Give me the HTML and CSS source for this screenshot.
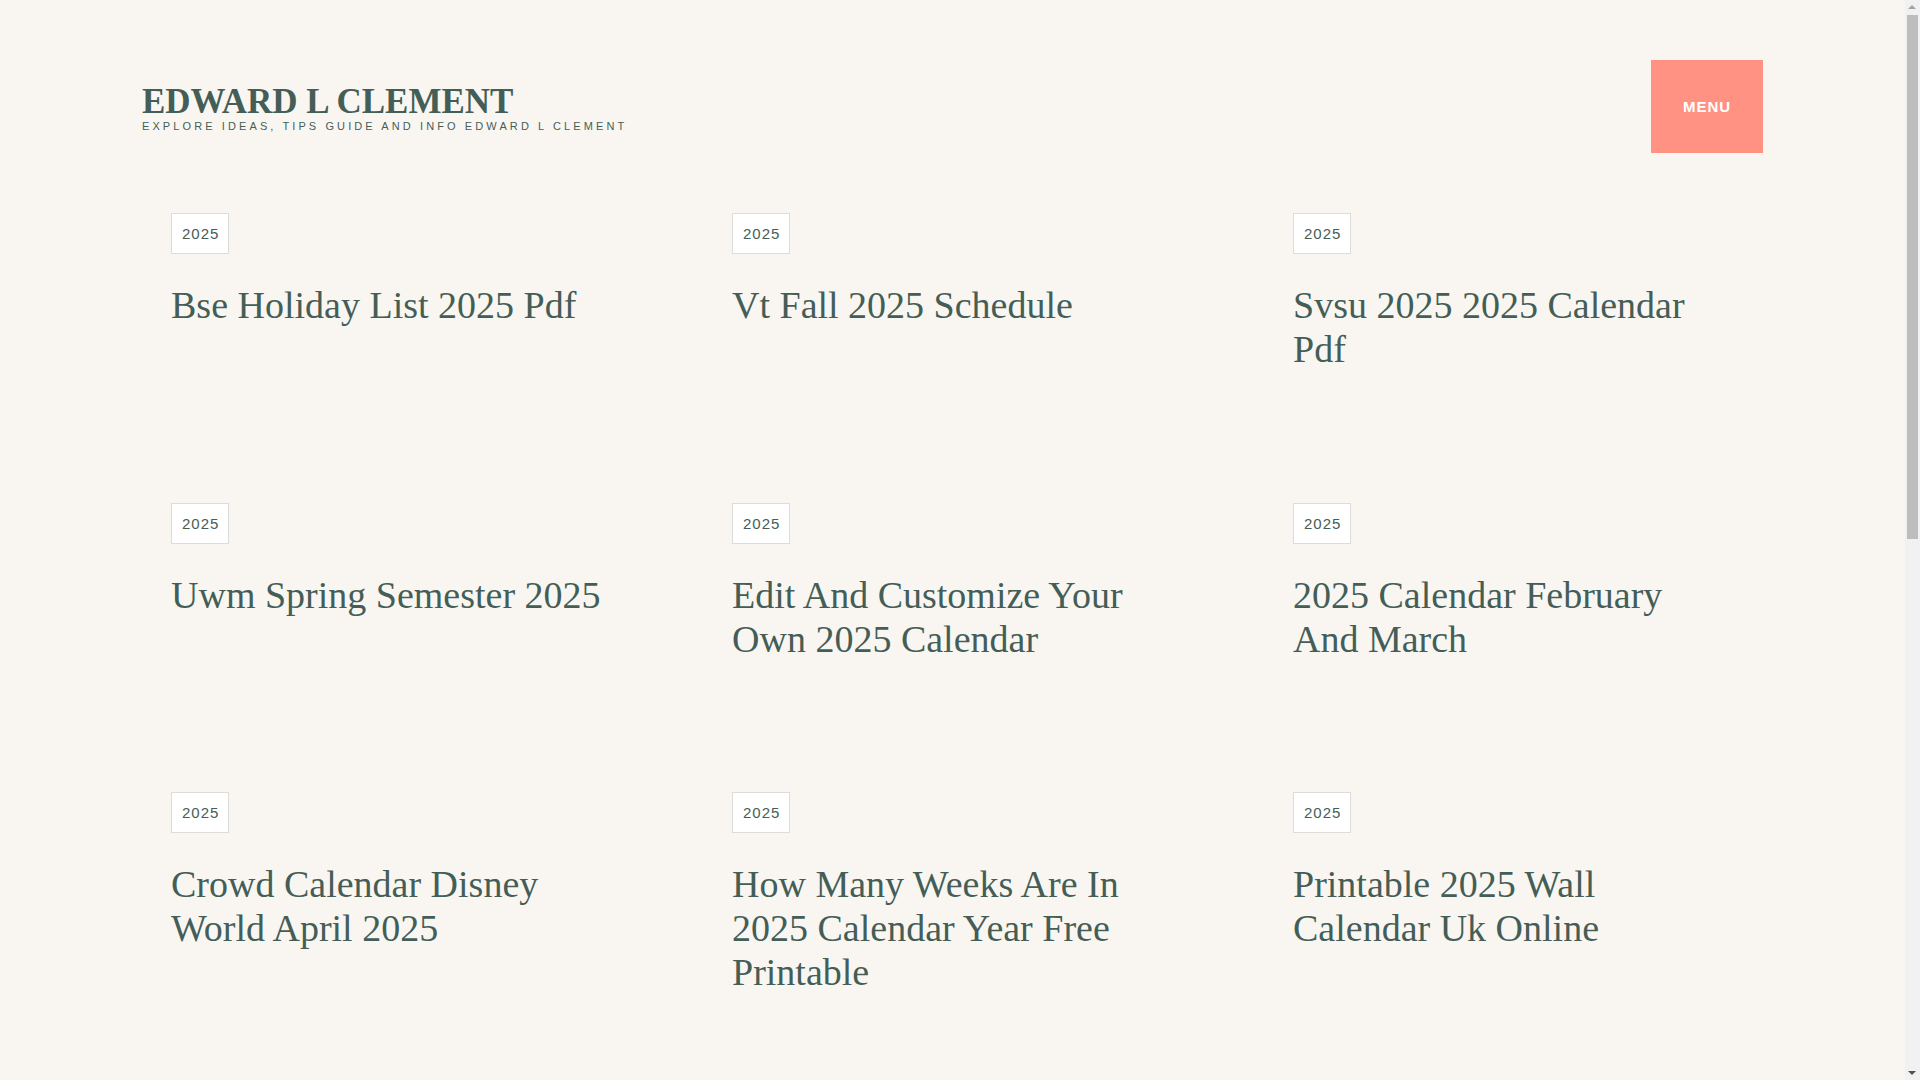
FILE: index.html
```html
<!DOCTYPE html>
<html lang="en">
<head>
<meta charset="utf-8">
<title>Edward L Clement</title>
<link rel="stylesheet" href="styles.css">
</head>
<body>
<header class="site-header">
  <div class="branding">
    <a class="site-title" href="#">EDWARD L CLEMENT</a>
    <p class="site-desc">Explore Ideas, Tips Guide and Info Edward L Clement</p>
  </div>
  <button class="menu-btn">MENU</button>
</header>
<main class="posts">
  <article class="post"><span class="tag">2025</span><h2 class="post-title">Bse Holiday List 2025 Pdf</h2></article>
  <article class="post"><span class="tag">2025</span><h2 class="post-title">Vt Fall 2025 Schedule</h2></article>
  <article class="post"><span class="tag">2025</span><h2 class="post-title">Svsu 2025 2025 Calendar Pdf</h2></article>
  <article class="post"><span class="tag">2025</span><h2 class="post-title">Uwm Spring Semester 2025</h2></article>
  <article class="post"><span class="tag">2025</span><h2 class="post-title">Edit And Customize Your Own 2025 Calendar</h2></article>
  <article class="post"><span class="tag">2025</span><h2 class="post-title">2025 Calendar February And March</h2></article>
  <article class="post"><span class="tag">2025</span><h2 class="post-title">Crowd Calendar Disney World April 2025</h2></article>
  <article class="post"><span class="tag">2025</span><h2 class="post-title">How Many Weeks Are In 2025 Calendar Year Free Printable</h2></article>
  <article class="post"><span class="tag">2025</span><h2 class="post-title">Printable 2025 Wall Calendar Uk Online</h2></article>
</main>
<footer class="site-footer"></footer>
<div class="scrollbar" aria-hidden="true">
  <span class="sb-up"></span>
  <span class="sb-thumb"></span>
  <span class="sb-down"></span>
</div>
</body>
</html>
```
FILE: styles.css
```css
html, body {
  margin: 0;
  padding: 0;
}
body {
  background: #f9f6f2;
  color: #445e57;
  font-family: "Liberation Serif", "Times New Roman", serif;
  padding-right: 15px;
}
.site-header {
  width: 1621px;
  margin: 0 auto;
  padding: 60px 0;
  display: flex;
  align-items: center;
  justify-content: space-between;
}
.branding {
  display: flex;
  flex-direction: column;
}
.site-title {
  font-family: "Liberation Serif", serif;
  font-weight: 700;
  font-size: 35px;
  line-height: 41px;
  color: #445e57;
  text-decoration: none;
}
.site-desc {
  margin: -3px 0 0;
  font-family: "Liberation Sans", Arial, sans-serif;
  font-size: 11px;
  line-height: 14px;
  letter-spacing: 3.1px;
  text-transform: uppercase;
  color: #445e57;
}
.menu-btn {
  width: 112px;
  height: 93px;
  border: 0;
  background: #ff9283;
  color: #ffffff;
  font-family: "Liberation Sans", Arial, sans-serif;
  font-weight: 700;
  font-size: 15px;
  letter-spacing: 1px;
  padding: 0;
}
.posts {
  width: 1683px;
  margin: 0 auto;
  display: grid;
  grid-template-columns: repeat(3, 1fr);
  row-gap: 131.5px;
}
.post {
  padding: 0 60px;
  display: flex;
  flex-direction: column;
  align-items: flex-start;
}
.tag {
  display: inline-block;
  background: #ffffff;
  border: 1px solid #dcdcd8;
  font-family: "Liberation Sans", Arial, sans-serif;
  font-size: 15px;
  line-height: 17px;
  letter-spacing: 1px;
  padding: 11px 9px 11px 10px;
  color: #445e57;
}
.post-title {
  margin: 29px 0 0;
  font-family: "Liberation Serif", "Times New Roman", serif;
  font-weight: 400;
  font-size: 38px;
  line-height: 44px;
  color: #445e57;
}
.site-footer {
  height: 900px;
}
.scrollbar {
  position: fixed;
  top: 0;
  right: 0;
  width: 15px;
  height: 100vh;
  background: #f1f1f1;
}
.sb-thumb {
  position: absolute;
  top: 15px;
  left: 2px;
  width: 11px;
  height: 524px;
  background: #bdbdbd;
}
.sb-up,
.sb-down {
  position: absolute;
  left: 3px;
  width: 0;
  height: 0;
  border-left: 4.5px solid transparent;
  border-right: 4.5px solid transparent;
}
.sb-up {
  top: 5px;
  border-bottom: 4px solid #a3a3a3;
}
.sb-down {
  bottom: 5px;
  border-top: 4px solid #505050;
}
```
